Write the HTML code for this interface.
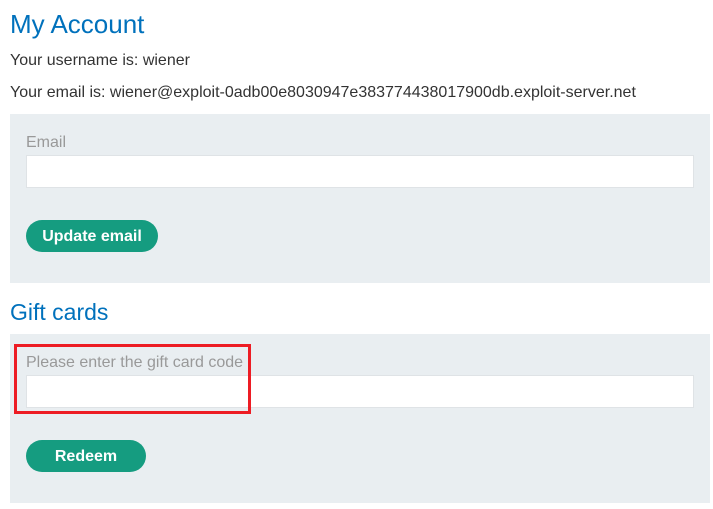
<!DOCTYPE html>
<html><head><style>
body{margin:0;background:#fff;font-family:"Liberation Sans",Arial,sans-serif;color:#333;width:713px;height:509px;overflow:hidden;position:relative}
.a{position:absolute;white-space:nowrap}
h1{position:absolute;margin:0;left:10px;top:9px;font-size:26px;font-weight:normal;color:#0071bc}
h2{position:absolute;margin:0;left:10px;top:299px;font-size:23px;font-weight:normal;color:#0071bc}
.p{position:absolute;left:10px;width:700px;height:169px;background:#e9eef1}
.lbl{position:absolute;left:26px;font-size:16px;color:#999}
.in{position:absolute;left:26px;width:668px;height:31px;background:#fff;border:1px solid #dfe3e6;box-sizing:border-box}
.btn{position:absolute;left:26px;height:32px;border-radius:16px;background:#159c80;color:#fff;font-weight:bold;font-size:16px;line-height:33px;text-align:center}
</style></head><body>
<h1>My Account</h1>
<div class="a" style="left:10px;top:52px;font-size:16px">Your username is: wiener</div>
<div class="a" style="left:10px;top:84px;font-size:16px">Your email is: wiener@exploit-0adb00e8030947e383774438017900db.exploit-server.net</div>
<div class="p" style="top:114px"></div>
<div class="lbl" style="top:134px">Email</div>
<div class="in" style="top:155px;height:33px"></div>
<div class="btn" style="top:220px;width:132px">Update email</div>
<h2>Gift cards</h2>
<div class="p" style="top:334px"></div>
<div class="lbl" style="top:354px">Please enter the gift card code</div>
<div class="in" style="top:375px;height:33px"></div>
<div class="btn" style="top:440px;width:120px">Redeem</div>
<div style="position:absolute;left:14px;top:344px;width:237px;height:70px;border:3px solid #ed1c24;box-sizing:border-box"></div>
</body></html>
